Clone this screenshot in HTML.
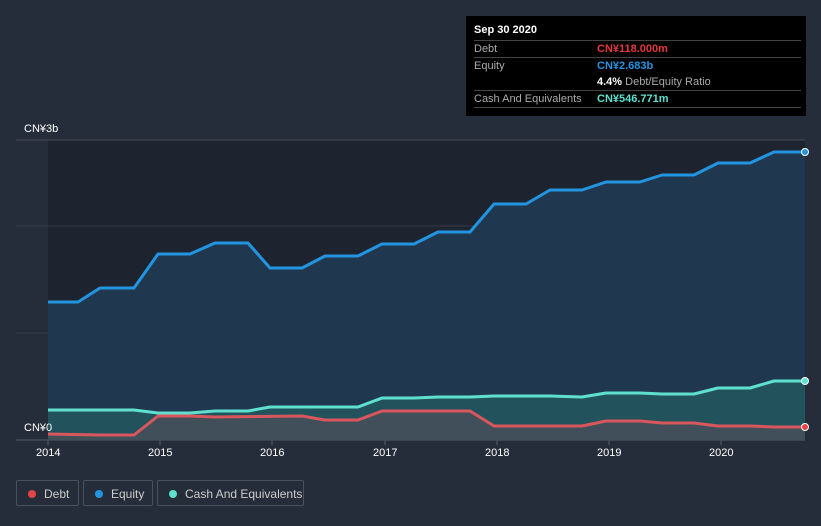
<!DOCTYPE html>
<html><head><style>
body{margin:0;width:821px;height:526px;background:#262d3a;font-family:"Liberation Sans","Noto Sans CJK SC",sans-serif;overflow:hidden;position:relative}
.tip{position:absolute;left:466px;top:16px;width:340px;height:100px;background:#000;color:#fff;font-size:11px}
.tip .r{position:absolute;left:8px;width:327px;border-top:1px solid #444;height:16px;line-height:16px;color:#aaa}
.tip .v{position:absolute;left:123px;font-weight:bold}
.leg{position:absolute;top:480px;height:26px;border:1px solid #4a505c;border-radius:2px;color:#ccc;font-size:12px;line-height:26px;box-sizing:border-box}
.leg i{position:absolute;left:11px;top:9px;width:8px;height:8px;border-radius:50%}
.leg span{position:absolute;left:27px}
.yr{position:absolute;top:447px;color:#fff;font-size:11px}
</style></head><body>
<svg width="821" height="526" style="position:absolute;left:0;top:0">
<rect x="48" y="140" width="757" height="300" fill="#1e242f"/>
<line x1="16" y1="140" x2="805" y2="140" stroke="#444a55"/>
<line x1="16" y1="226" x2="805" y2="226" stroke="#333a46"/>
<line x1="16" y1="333" x2="805" y2="333" stroke="#333a46"/>
<line x1="16" y1="440" x2="805" y2="440" stroke="#555b66"/>
<polygon fill="#1f3850" points="48,302 78,302 100,288 134,288 158,254 190,254 215,243 248,243 270,268 302,268 325,256 358,256 382,244 414,244 438,232 470,232 494,204 526,204 550,190 582,190 606,182 640,182 662,175 694,175 718,163 750,163 774,152 805,152 805,440 48,440"/>
<polygon fill="#235a60" opacity="0.8" points="48,410 134,410 158,413 190,413 215,411 248,411 270,407 358,407 382,398 414,398 438,397 470,397 494,396 550,396 582,397 606,393 640,393 662,394 694,394 718,388 750,388 774,381 805,381 805,440 48,440"/>
<polygon fill="#4a4f5a" opacity="0.8" points="48,434 100,435 134,435 158,416 190,416 215,417 302,416 325,420 358,420 382,411 470,411 494,426 582,426 606,421 640,421 662,423 694,423 718,426 750,426 774,427 805,427 805,440 48,440"/>
<polyline fill="none" stroke="#2394e0" stroke-width="3" stroke-linejoin="round" points="48,302 78,302 100,288 134,288 158,254 190,254 215,243 248,243 270,268 302,268 325,256 358,256 382,244 414,244 438,232 470,232 494,204 526,204 550,190 582,190 606,182 640,182 662,175 694,175 718,163 750,163 774,152 805,152"/>
<polyline fill="none" stroke="#5fe0cf" stroke-width="3" stroke-linejoin="round" points="48,410 134,410 158,413 190,413 215,411 248,411 270,407 358,407 382,398 414,398 438,397 470,397 494,396 550,396 582,397 606,393 640,393 662,394 694,394 718,388 750,388 774,381 805,381"/>
<polyline fill="none" stroke="#d9575c" stroke-width="3" stroke-linejoin="round" points="48,434 100,435 134,435 158,416 190,416 215,417 302,416 325,420 358,420 382,411 470,411 494,426 582,426 606,421 640,421 662,423 694,423 718,426 750,426 774,427 805,427"/>
<circle cx="805" cy="152" r="3.5" fill="#2394e0" stroke="#fff"/>
<circle cx="805" cy="381" r="3.5" fill="#5fe0cf" stroke="#fff"/>
<circle cx="805" cy="427" r="3.5" fill="#e64545" stroke="#fff"/>
<g stroke="#555b66"><line x1="48" y1="440" x2="48" y2="445"/><line x1="160" y1="440" x2="160" y2="445"/><line x1="272" y1="440" x2="272" y2="445"/><line x1="385" y1="440" x2="385" y2="445"/><line x1="497" y1="440" x2="497" y2="445"/><line x1="609" y1="440" x2="609" y2="445"/><line x1="721" y1="440" x2="721" y2="445"/></g>
</svg>
<div style="position:absolute;left:24px;top:123px;color:#fff;font-size:11px">CN¥3b</div>
<div style="position:absolute;left:24px;top:422px;color:#fff;font-size:11px">CN¥0</div>
<div class="yr" style="left:36px">2014</div><div class="yr" style="left:148px">2015</div><div class="yr" style="left:260px">2016</div><div class="yr" style="left:373px">2017</div><div class="yr" style="left:485px">2018</div><div class="yr" style="left:597px">2019</div><div class="yr" style="left:709px">2020</div>
<div class="tip">
<div style="position:absolute;left:8px;top:8px;font-weight:bold">Sep 30 2020</div>
<div class="r" style="top:24px">Debt<span class="v" style="color:#e5393d">CN¥118.000m</span></div>
<div class="r" style="top:41px">Equity<span class="v" style="color:#2394e0">CN¥2.683b</span></div>
<div class="r" style="top:58px;border:none"><span class="v" style="color:#fff">4.4% <span style="font-weight:normal;color:#aaa">Debt/Equity Ratio</span></span></div>
<div class="r" style="top:74px;border-bottom:1px solid #444">Cash And Equivalents<span class="v" style="color:#5fe0cf">CN¥546.771m</span></div>
</div>
<div class="leg" style="left:16px;width:63px"><i style="background:#e64545"></i><span>Debt</span></div>
<div class="leg" style="left:83px;width:70px"><i style="background:#2394e0"></i><span>Equity</span></div>
<div class="leg" style="left:157px;width:147px"><i style="background:#5fe0cf"></i><span>Cash And Equivalents</span></div>
</body></html>
